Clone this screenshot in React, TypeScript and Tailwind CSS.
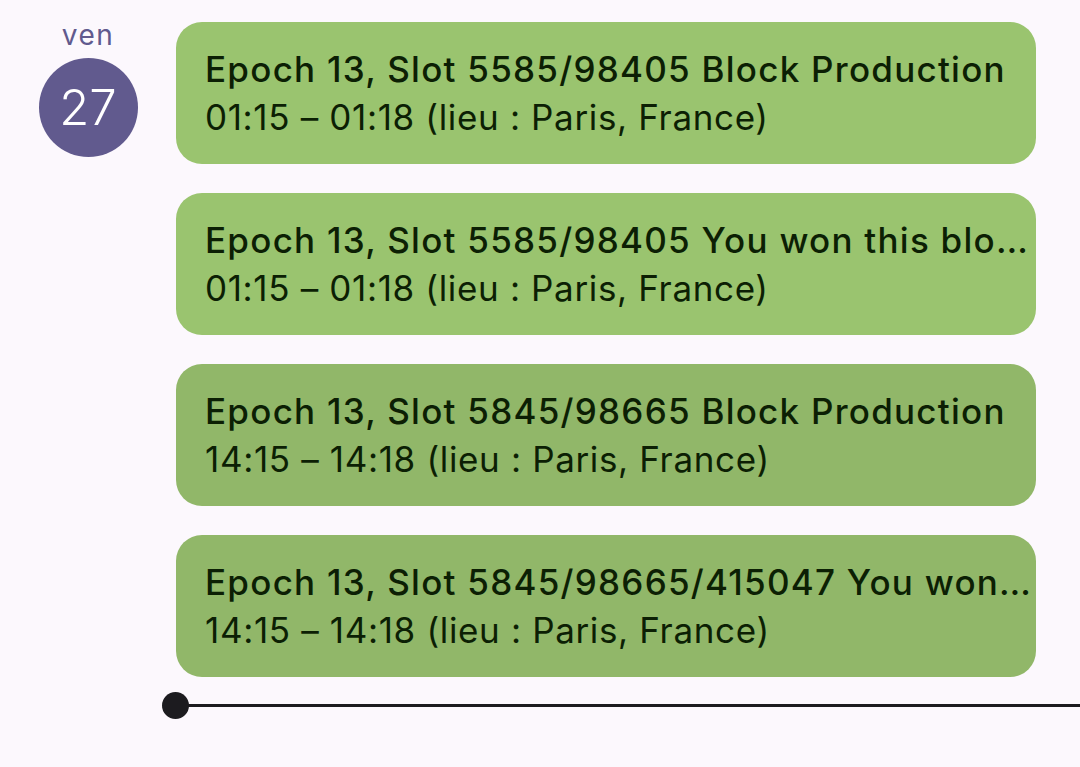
import React from 'react';

type Event = {
  id: number;
  title: string;
  time: string;
  dim?: boolean;
};

const events: Event[] = [
  { id: 1, title: 'Epoch 13, Slot 5585/98405 Block Production', time: '01:15 – 01:18 (lieu : Paris, France)' },
  { id: 2, title: 'Epoch 13, Slot 5585/98405 You won this block', time: '01:15 – 01:18 (lieu : Paris, France)' },
  { id: 3, title: 'Epoch 13, Slot 5845/98665 Block Production', time: '14:15 – 14:18 (lieu : Paris, France)', dim: true },
  { id: 4, title: 'Epoch 13, Slot 5845/98665/415047 You won this block', time: '14:15 – 14:18 (lieu : Paris, France)', dim: true },
];

const App: React.FC = () => {
  return (
    <div className="w-[1080px] h-[767px] overflow-hidden bg-[#fcf8fd] font-['Inter',sans-serif]">
      <div className="flex pt-[22px]">
        {/* Day column */}
        <div className="w-[176px] shrink-0 flex flex-col pl-[39px]">
          <div className="w-[98px] flex flex-col items-center">
            <span className="text-[28px] leading-[32px] tracking-[1.5px] -mt-[3px] text-[#615a8e]">ven</span>
            <div className="mt-[7px] w-[99px] h-[99px] rounded-full bg-[#615a8e] flex items-center justify-center">
              <span className="text-[49px] leading-none font-light text-white">27</span>
            </div>
          </div>
        </div>
        {/* Events */}
        <div className="flex-1 min-w-0 flex flex-col gap-[29px] pr-[44px]">
          {events.map((e) => (
            <div
              key={e.id}
              className={`h-[142px] rounded-[26px] pl-[29px] flex flex-col justify-center text-[#0c1f04] ${e.dim ? 'bg-[#91b769]' : 'bg-[#9ac46f]'}`}
            >
              <p className="text-[35px] leading-[48px] font-medium tracking-[1.25px] truncate">{e.title}</p>
              <p className="text-[35px] leading-[48px] tracking-[0.65px] truncate">{e.time}</p>
            </div>
          ))}
        </div>
      </div>

      {/* Now indicator */}
      <div className="flex items-center mt-[15px] pl-[162px]">
        <div className="w-[27px] h-[27px] rounded-full bg-[#1c1b1f] shrink-0" />
        <div className="flex-1 h-[3px] -ml-[2px] bg-[#1c1b1f]" />
      </div>
    </div>
  );
};

export default App;
